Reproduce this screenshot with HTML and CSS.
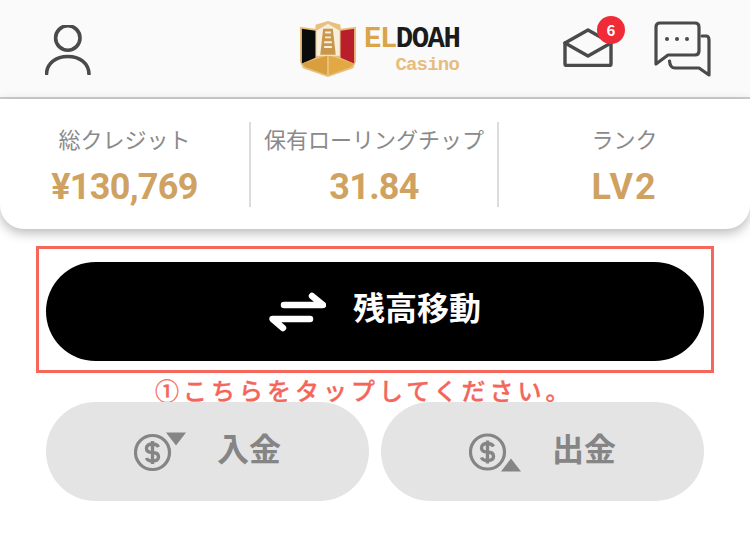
FILE: index.html
```html
<!DOCTYPE html>
<html lang="ja">
<head>
<meta charset="utf-8">
<title>残高移動</title>
<link rel="stylesheet" href="styles.css">
</head>
<body>
<header class="topbar">
  <svg class="icon-user" viewBox="0 0 46 50" width="46" height="50" fill="none" stroke="#4a4a4a" stroke-width="3.6" stroke-linecap="round">
    <circle cx="22.8" cy="13" r="12.2"/>
    <path d="M1.5 49C2 38 11 31.5 22.8 31.5S43.6 38 44 49"/>
  </svg>
  <div class="logo">
    <svg class="logo-mark" viewBox="0 0 60 58" width="58" height="58">
      <path d="M1 6L17 8V4L30 0L43 4V8L59 6V42L56 49L30 58L4 49L1 42Z" fill="#e8c07e"/>
      <path d="M3 8L17 10V38L3 44Z" fill="#0b0b0b"/>
      <path d="M43 10L57 8V44L43 38Z" fill="#b91f2b"/>
      <path d="M18 10L30 3L42 10V36H18Z" fill="#f7eedd"/>
      <path d="M25 8H35L38 35H22Z" fill="#c9974b"/>
      <path d="M27 12H33M27 17H33M26 22H34M26 27H34" stroke="#f7eedd" stroke-width="2"/>
      <path d="M3 44L29 36V56L7 48Z" fill="#d99e3d"/>
      <path d="M57 44L31 36V56L53 48Z" fill="#e2a843"/>
    </svg>
    <div class="logo-text">
      <div class="logo-name"><span class="logo-el">EL</span>DOAH</div>
      <div class="logo-sub">Casino</div>
    </div>
  </div>
  <div class="top-actions">
    <div class="mail">
      <svg viewBox="0 0 50 39" width="50" height="39" fill="none" stroke="#4a4a4a" stroke-width="3.4" stroke-linejoin="round" stroke-linecap="round">
        <path d="M2 15L25 2L48 15V36Q48 37.500 46.500 37.500H3.500Q2 37.500 2 36Z"/>
        <path d="M2 15L25 28L48 15"/>
      </svg>
      <span class="badge">6</span>
    </div>
    <svg class="icon-chat" viewBox="0 0 58 56" width="58" height="56" fill="none" stroke="#4a4a4a" stroke-width="3.2" stroke-linejoin="round" stroke-linecap="round">
      <path d="M2 6Q2 2 6 2H41Q45 2 45 6V30Q45 34 41 34H14L2 43Z"/>
      <path d="M48 15H52Q55 15 55 19V54L45 47H21Q16 47 15.500 40"/>
      <circle cx="13" cy="18" r="2" fill="#4a4a4a" stroke="none"/>
      <circle cx="23" cy="18" r="2" fill="#4a4a4a" stroke="none"/>
      <circle cx="33" cy="18" r="2" fill="#4a4a4a" stroke="none"/>
    </svg>
  </div>
</header>

<section class="stats">
  <div class="stat">
    <div class="stat-label">総クレジット</div>
    <div class="stat-value">¥130,769</div>
  </div>
  <div class="stat">
    <div class="stat-label">保有ローリングチップ</div>
    <div class="stat-value">31.84</div>
  </div>
  <div class="stat">
    <div class="stat-label">ランク</div>
    <div class="stat-value stat-value-wide">LV2</div>
  </div>
</section>

<main class="actions">
  <div class="highlight">
    <button class="btn btn-primary" type="button">
      <svg viewBox="0 0 57 40" width="57" height="40" fill="none" stroke="#fff" stroke-width="6.500" stroke-linecap="round" stroke-linejoin="round">
        <path d="M15 13H54L43 4"/>
        <path d="M41 27H3.500L14 36"/>
      </svg>
      <span class="btn-label">残高移動</span>
    </button>
  </div>
  <p class="note">①こちらをタップしてください。</p>
  <div class="btn-row">
    <button class="btn btn-muted" type="button">
      <svg viewBox="0 0 52 40" width="52" height="40" fill="none" stroke="#858585">
        <circle cx="18.500" cy="20.500" r="17" stroke-width="3.200"/>
        <path d="M24.500 15Q23 12 18.500 12Q12.500 12 12.500 16.500Q12.500 20.500 18.500 20.500Q24.500 20.500 24.500 25Q24.500 29 18.500 29Q13.500 29 12.500 26M18.500 9V32" stroke-width="3.400"/>
        <path d="M32 0.500H52L42 13.500Z" fill="#858585" stroke="none"/>
      </svg>
      <span class="btn-label">入金</span>
    </button>
    <button class="btn btn-muted" type="button">
      <svg viewBox="0 0 52 40" width="52" height="40" fill="none" stroke="#858585">
        <circle cx="18.500" cy="20" r="17" stroke-width="3.200"/>
        <path d="M24.500 14.500Q23 11.500 18.500 11.500Q12.500 11.500 12.500 16Q12.500 20 18.500 20Q24.500 20 24.500 24.500Q24.500 28.500 18.500 28.500Q13.500 28.500 12.500 25.500M18.500 8.500V31.500" stroke-width="3.400"/>
        <path d="M32 39.500H52L42 26.500Z" fill="#858585" stroke="none"/>
      </svg>
      <span class="btn-label">出金</span>
    </button>
  </div>
</main>
</body>
</html>
```

FILE: styles.css
```css
* {
  box-sizing: border-box;
}

html,
body {
  margin: 0;
  padding: 0;
  height: 100%;
  overflow: hidden;
}

body {
  background: #fff;
  font-family: "Noto Sans CJK JP", "Noto Sans", sans-serif;
}

.topbar {
  height: 99px;
  padding: 0 38px 0 45px;
  display: flex;
  align-items: center;
  justify-content: space-between;
  background: #fafafa;
  border-bottom: 2px solid #cfcfcf;
}

.icon-user {
  margin-top: 2px;
}

.logo {
  display: flex;
  align-items: center;
  gap: 7px;
  margin-left: 104px;
}

.logo-mark {
  display: block;
}

.logo-text {
  width: 95px;
  padding-top: 4px;
  font-family: "Liberation Mono", monospace;
  font-weight: 700;
}

.logo-name {
  font-size: 29px;
  letter-spacing: -1.500px;
  color: #1b1b1b;
  height: 24px;
  line-height: 24px;
  white-space: nowrap;
}

.logo-el {
  color: #dba44a;
}

.logo-sub {
  font-size: 19px;
  line-height: 16px;
  letter-spacing: -0.800px;
  color: #e6bd7c;
  text-align: right;
  margin-top: 5px;
}

.top-actions {
  display: flex;
  align-items: center;
  gap: 41px;
}

.mail {
  position: relative;
  width: 50px;
  height: 39px;
  margin-top: -3px;
}

.mail svg,
.icon-chat {
  display: block;
}

.badge {
  position: absolute;
  left: 34px;
  top: -12px;
  width: 28px;
  height: 28px;
  border-radius: 50%;
  background: #ee2b36;
  color: #fff;
  font-size: 15px;
  font-weight: 700;
  line-height: 28px;
  text-align: center;
}

.stats {
  height: 130px;
  padding-top: 23px;
  display: grid;
  grid-template-columns: 249px 248px 1fr;
  align-items: start;
  background: #fff;
  border-radius: 0 0 24px 24px;
  box-shadow: 0 4px 12px rgba(0, 0, 0, 0.28);
  position: relative;
}

.stat {
  height: 85px;
  text-align: center;
  border-left: 2px solid #dcdcdc;
}

.stat:first-child {
  border-left: 0;
}

.stat-label {
  height: 43px;
  font-size: 22px;
  line-height: 33px;
  color: #8a8a8a;
  white-space: nowrap;
}

.stat-value {
  font-family: "Roboto", "Liberation Sans", sans-serif;
  font-size: 36px;
  font-weight: 700;
  line-height: 44px;
  letter-spacing: -0.700px;
  color: #cfa262;
}

.stat-value-wide {
  letter-spacing: 2px;
}

.actions {
  padding: 17px 36px 0;
}

.highlight {
  height: 127px;
  padding: 13px 7px 9px;
  border: 3px solid #f4675a;
}

.btn {
  display: flex;
  align-items: center;
  justify-content: center;
  width: 100%;
  height: 99px;
  padding: 0;
  border: 0;
  border-radius: 50px;
  font-family: inherit;
  font-weight: 700;
}

.btn-label {
  margin-bottom: 10px;
}

.btn-primary {
  gap: 27px;
  background: #000;
  color: #fff;
  font-size: 32px;
}

.btn-primary .btn-label {
  margin-bottom: 12px;
}

.note {
  margin: 4px 0 0;
  padding-left: 119px;
  height: 25px;
  font-size: 24px;
  line-height: 25px;
  font-weight: 500;
  -webkit-text-stroke: 0.3px #f4655a;
  letter-spacing: 4px;
  color: #f4655a;
  white-space: nowrap;
}

.btn-row {
  display: flex;
  gap: 12px;
  padding: 0 10px;
}

.btn-muted {
  flex: 1 1 0;
  gap: 31px;
  background: #e4e4e4;
  color: #858585;
  font-size: 32px;
}
```
